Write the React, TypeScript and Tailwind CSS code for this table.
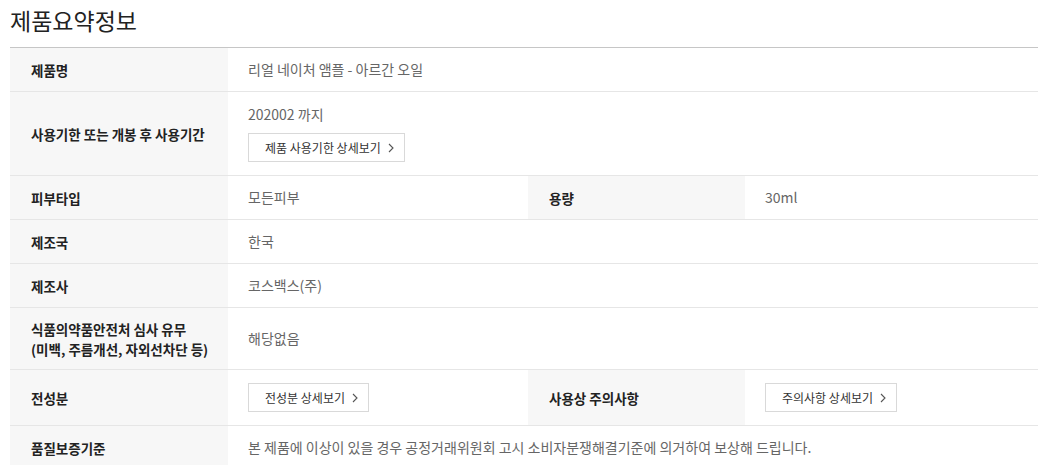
import type { ReactNode } from "react";

const font = { fontFamily: '"Noto Sans CJK KR", "Noto Sans", sans-serif' };

function Chevron() {
  return (
    <svg width="6" height="10" viewBox="0 0 6 10" fill="none" className="shrink-0">
      <path d="M1 1l4 4-4 4" stroke="#555" strokeWidth="1.1" />
    </svg>
  );
}

function DetailButton({ label }: { label: string }) {
  return (
    <button
      type="button"
      className="flex h-[29px] items-center gap-[7px] border border-[#d9d9d9] bg-white pl-4 pr-[10px] text-[12px] text-[#333]"
    >
      <span>{label}</span>
      <Chevron />
    </button>
  );
}

function Th({ children }: { children: ReactNode }) {
  return (
    <div className="flex items-center bg-[#f7f7f7] pl-[21px] pr-2 text-[13.5px] font-bold leading-5 text-[#222]">
      {children}
    </div>
  );
}

function Td({ children, wide = false }: { children: ReactNode; wide?: boolean }) {
  return (
    <div
      className={`flex items-center pl-5 pr-3 text-[14px] leading-[19px] text-[#666] ${
        wide ? "col-span-3" : ""
      }`}
    >
      {children}
    </div>
  );
}

function Row({ height, children }: { height: string; children: ReactNode }) {
  return (
    <div className={`grid grid-cols-[218px_300px_217px_1fr] border-b border-[#e6e6e6] ${height}`}>
      {children}
    </div>
  );
}

export default function App() {
  return (
    <div className="min-h-screen bg-white pl-[10px] pr-px" style={font}>
      <h2 className="h-[47px] pt-[3px] text-[23px] font-normal leading-[34px] text-[#222]">
        제품요약정보
      </h2>
      <div className="border-t border-[#c6c6c6]">
        <Row height="min-h-[44px]">
          <Th>제품명</Th>
          <Td wide>리얼 네이처 앰플 - 아르간 오일</Td>
        </Row>
        <Row height="min-h-[84px]">
          <Th>사용기한 또는 개봉 후 사용기간</Th>
          <div className="col-span-3 flex flex-col items-start pl-5 pt-[13px] pb-[13px]">
            <span className="text-[14px] leading-[19px] text-[#666]">202002 까지</span>
            <div className="mt-[9px]">
              <DetailButton label="제품 사용기한 상세보기" />
            </div>
          </div>
        </Row>
        <Row height="min-h-[44px]">
          <Th>피부타입</Th>
          <Td>모든피부</Td>
          <Th>용량</Th>
          <Td>30ml</Td>
        </Row>
        <Row height="min-h-[44px]">
          <Th>제조국</Th>
          <Td wide>한국</Td>
        </Row>
        <Row height="min-h-[44px]">
          <Th>제조사</Th>
          <Td wide>코스백스(주)</Td>
        </Row>
        <Row height="min-h-[62px]">
          <Th>
            식품의약품안전처 심사 유무
            <br />
            (미백, 주름개선, 자외선차단 등)
          </Th>
          <Td wide>해당없음</Td>
        </Row>
        <Row height="min-h-[56px]">
          <Th>전성분</Th>
          <Td>
            <DetailButton label="전성분 상세보기" />
          </Td>
          <Th>사용상 주의사항</Th>
          <Td>
            <DetailButton label="주의사항 상세보기" />
          </Td>
        </Row>
        <Row height="min-h-[44px]">
          <Th>품질보증기준</Th>
          <Td wide>본 제품에 이상이 있을 경우 공정거래위원회 고시 소비자분쟁해결기준에 의거하여 보상해 드립니다.</Td>
        </Row>
      </div>
    </div>
  );
}
